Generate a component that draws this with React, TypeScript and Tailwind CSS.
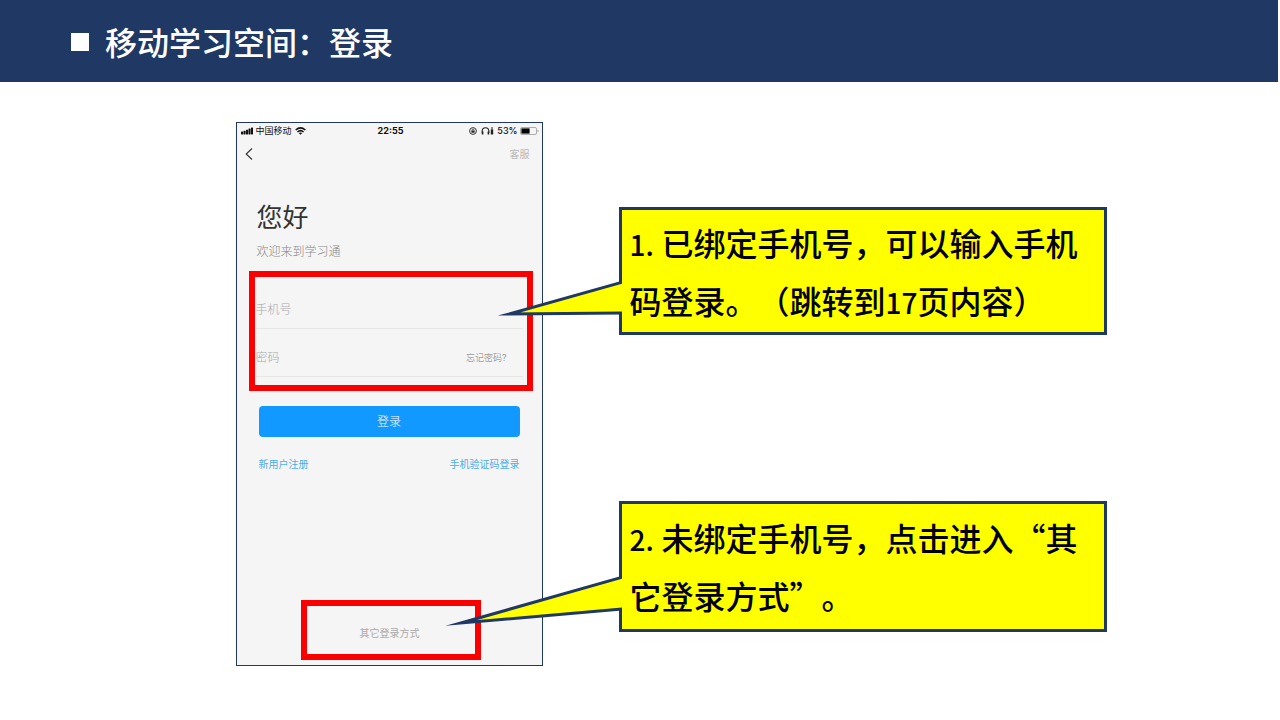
import { ReactNode, useState } from "react";

interface CalloutProps {
    className?: string;
    tail: ReactNode;
    children: ReactNode;
}

const SignalIcon = () => (
    <svg className="h-2 w-3" viewBox="0 0 12 8" fill="#111">
        <rect x="0" y="4.6" width="2.1" height="2.9" rx="0.4" />
        <rect x="2.5" y="3.7" width="2.1" height="3.8" rx="0.4" />
        <rect x="5" y="2.7" width="2.1" height="4.8" rx="0.4" />
        <rect x="7.5" y="1.6" width="2.1" height="5.9" rx="0.4" />
        <rect x="10" y="0.5" width="2" height="7" rx="0.4" />
    </svg>
);

const WifiIcon = () => (
    <svg className="h-2 w-[11px]" viewBox="0 0 11 8" fill="none" stroke="#111">
        <path d="M0.7 3Q5.5 -1.2 10.3 3" strokeWidth="1.6" />
        <path d="M2.4 5Q5.5 2.3 8.6 5" strokeWidth="1.5" />
        <path d="M3.8 6Q5.5 4.8 7.2 6L5.5 7.8Z" fill="#111" stroke="none" />
    </svg>
);

const RotationLockIcon = () => (
    <svg className="mr-0.5 h-2 w-2" viewBox="0 0 8 8" fill="none" stroke="#222">
        <circle cx="4" cy="4" r="3.4" strokeWidth="0.9" />
        <path d="M3 4V3.1a1 1 0 0 1 2 0V4" strokeWidth="0.7" />
        <rect x="2.4" y="3.7" width="3.2" height="2" fill="#222" stroke="none" />
    </svg>
);

const HeadphonesIcon = () => (
    <svg className="mr-px h-2 w-[13px]" viewBox="0 0 13 8" fill="none" stroke="#222">
        <path d="M1.2 6V4a3.3 3.3 0 0 1 6.6 0V6" strokeWidth="1.1" />
        <path d="M1.6 4.6V7.4M7.4 4.6V7.4" strokeWidth="1.6" />
        <rect x="9.8" y="2.2" width="2.4" height="5.4" rx="0.6" fill="#222" stroke="none" />
        <path d="M10 1h2" strokeWidth="1" />
    </svg>
);

const BatteryIcon = () => (
    <svg className="h-2 w-[19px]" viewBox="0 0 19 8" fill="none">
        <rect x="0.5" y="0.5" width="16" height="7" rx="1.4" stroke="#999" strokeWidth="0.8" />
        <rect x="1.4" y="1.4" width="8.2" height="5.2" fill="#000" />
        <path d="M17.6 2.8v2.4q1-.3 1-1.2t-1-1.2Z" fill="#999" />
    </svg>
);

const StatusBar = () => (
    <div className="grid h-4 grid-cols-3 items-center pr-[3px] pl-1 text-[9px] leading-4 text-[#111]">
        <div className="flex items-center gap-[3px]">
            <SignalIcon />
            <span>中国移动</span>
            <WifiIcon />
        </div>
        <span className="pl-0.5 text-center font-bold">22:55</span>
        <div className="flex items-center justify-end gap-0.5">
            <RotationLockIcon />
            <HeadphonesIcon />
            <span className="font-medium">53%</span>
            <BatteryIcon />
        </div>
    </div>
);

const PhoneScreen = () => {
    const [phone, setPhone] = useState("");
    const [password, setPassword] = useState("");

    return (
        <section className="w-[307px] shrink-0 border border-[#203864] bg-[#f5f5f5] pb-[5px] font-[Inter,'Noto_Sans_CJK_SC',sans-serif]">
            <StatusBar />
            <div className="flex h-[30px] items-center justify-between pr-3 pl-2">
                <button type="button" aria-label="返回">
                    <svg className="h-3 w-2" viewBox="0 0 8 12" fill="none" stroke="#333">
                        <path d="M7 0.5L1.2 6L7 11.5" strokeWidth="1.1" />
                    </svg>
                </button>
                <a href="#service" className="text-[10px] text-[#b8b8b8]">
                    客服
                </a>
            </div>
            <h2 className="mt-[33px] pl-5 text-[26px] leading-8 text-[#333]">您好</h2>
            <p className="mt-2 pl-5 text-xs leading-5 font-light text-[#888]">欢迎来到学习通</p>
            <form onSubmit={(e) => e.preventDefault()}>
                <div className="mt-[9px] mr-[9px] ml-3 border-6 border-[#fa0000] pt-1 pr-1 pb-2 pl-px font-light">
                    <div className="flex h-12 items-center border-b border-[#e6e6e6] pt-[10px]">
                        <input
                            type="tel"
                            aria-label="手机号"
                            placeholder="手机号"
                            value={phone}
                            onChange={(e) => setPhone(e.target.value)}
                            className="w-full text-xs outline-none placeholder:text-[#aaa]"
                        />
                    </div>
                    <div className="flex h-12 items-center border-b border-[#e6e6e6] pt-[10px] pr-4">
                        <input
                            type="password"
                            aria-label="密码"
                            placeholder="密码"
                            value={password}
                            onChange={(e) => setPassword(e.target.value)}
                            className="w-full min-w-0 text-xs outline-none placeholder:text-[#aaa]"
                        />
                        <a href="#forgot" className="text-[9px] whitespace-nowrap text-[#777]">
                            忘记密码?
                        </a>
                    </div>
                </div>
                <div className="px-[22px]">
                    <button
                        type="submit"
                        className="mt-[15px] h-[31px] w-full rounded bg-[#1299ff] text-xs font-light text-white"
                    >
                        登录
                    </button>
                    <div className="mt-5 flex justify-between text-[10px] leading-[14px] text-[#4eade8]">
                        <a href="#register">新用户注册</a>
                        <a href="#sms">手机验证码登录</a>
                    </div>
                </div>
            </form>
            <div className="mt-[129px] ml-16 flex h-[60px] w-[180px] items-center justify-center border-6 border-[#fa0000] pt-[6px] pr-0.5">
                <a href="#other" className="text-[10px] text-[#aaa]">
                    其它登录方式
                </a>
            </div>
        </section>
    );
};

const Callout = ({ className, tail, children }: CalloutProps) => (
    <div className={`relative border-3 border-[#203864] bg-[#ffff00] pl-2 ${className}`}>
        {tail}
        <p className="text-[32px] leading-[58px] font-medium text-black [text-spacing-trim:space-all]">
            {children}
        </p>
    </div>
);

// Half-width figures that share one full-width cell
const Figures = ({ children }: { children: ReactNode }) => (
    <span className="inline-block w-8 text-[28px] leading-none">{children}</span>
);

const App = () => (
    <div lang="zh-CN" className="min-h-screen bg-white font-['Noto_Sans_CJK_SC',sans-serif]">
        <header className="mr-0.5 flex h-[82px] items-center gap-4 bg-[#203864] pl-[71px]">
            <span className="mt-0.5 size-[18px] bg-white" />
            <h1 className="text-[32px] leading-10 font-medium text-white [text-spacing-trim:space-all]">
                移动学习空间：登录
            </h1>
        </header>
        <main className="flex justify-center gap-[76px] pt-10 pl-[62px]">
            <PhoneScreen />
            <div className="flex max-w-[488px] flex-1 flex-col gap-[166px] pt-[85px]">
                <Callout
                    className="py-[3px]"
                    tail={
                        <svg className="absolute top-0 -left-[130px] h-[122px] w-[130px]" viewBox="0 0 130 122">
                            <path
                                d="M131 72L17 104L131 103"
                                fill="#ffff00"
                                stroke="#203864"
                                strokeWidth="3"
                                strokeMiterlimit="30"
                            />
                        </svg>
                    }
                >
                    <Figures>1.</Figures>已绑定手机号，可以输入手机码登录。（跳转到
                    <Figures>17</Figures>页内容）
                </Callout>
                <Callout
                    className="pt-1 pb-[5px]"
                    tail={
                        <svg className="absolute top-0 -left-[180px] h-[125px] w-[180px]" viewBox="0 0 180 125">
                            <path
                                d="M181 73L19 119L181 105"
                                fill="#ffff00"
                                stroke="#203864"
                                strokeWidth="3"
                                strokeMiterlimit="30"
                            />
                        </svg>
                    }
                >
                    <Figures>2.</Figures>未绑定手机号，点击进入“其它登录方式”。
                </Callout>
            </div>
        </main>
    </div>
);

export default App;
